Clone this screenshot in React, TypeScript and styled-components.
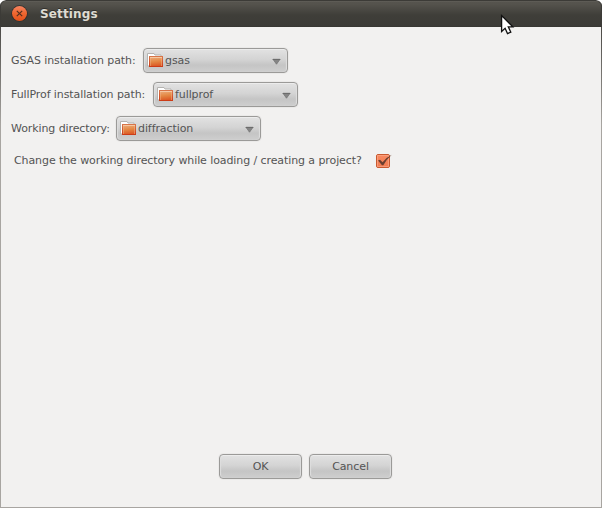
import React from "react";
import styled, { createGlobalStyle } from "styled-components";

const GlobalStyle = createGlobalStyle`
  * { box-sizing: border-box; }
  body { margin: 0; background: #fff; font-family: "DejaVu Sans", sans-serif; font-size: 11px; letter-spacing: -0.09px; color: #545454; }
  button { font: inherit; color: inherit; letter-spacing: inherit; }
`;

const Window = styled.main`
  position: relative;
  display: flex;
  flex-direction: column;
  width: 602px;
  height: 508px;
  overflow: hidden;
  border-radius: 6px 6px 0 0;
  background:
    linear-gradient(#4a4945 27px, #a8a5a1 125px) left / 1px 100% no-repeat,
    linear-gradient(#4a4945 27px, #a8a5a1 125px) right / 1px 100% no-repeat,
    #f2f1f0;
  border-bottom: 1px solid #a8a5a1;
`;

const TitleBar = styled.header`
  display: flex;
  align-items: center;
  flex: 0 0 27px;
  gap: 12px;
  padding: 0 11px;
  border: solid #3c3b37;
  border-width: 1px 1px 0;
  border-radius: 6px 6px 0 0;
  background: linear-gradient(#65635d 0, #56544e 1px, #55534d 3px, #3f3e39 14px, #3c3b37 25px, #353430 26px);
`;

const Title = styled.h1`
  margin: 0;
  font-size: 12px;
  line-height: 16px;
  font-weight: bold;
  letter-spacing: 0.15px;
  color: #dfdbd2;
  text-shadow: 0 -1px #302f2b;
`;

const CloseButton = styled.button`
  display: block;
  width: 16px;
  height: 16px;
  padding: 0;
  border: 0;
  background: none;
  svg { display: block; overflow: visible; }
`;

const Form = styled.section`
  display: flex;
  flex-direction: column;
  align-items: flex-start;
  gap: 9px;
  padding: 21px 11px 0;
`;

const Row = styled.div`
  display: flex;
  align-items: center;
  height: 25px;
`;

const Label = styled.label<{ $width: number }>`
  width: ${(p) => p.$width}px;
  white-space: nowrap;
  line-height: 15px;
`;

const Button = styled.button`
  display: flex;
  align-items: center;
  justify-content: center;
  width: 83px;
  height: 25px;
  padding: 0 0 1px;
  border: 1px solid #9b9a98;
  border-radius: 4px;
  background: linear-gradient(#e2e2e2, #d4d4d4 45%, #c5c5c5 70%, #cecece);
  box-shadow: inset 0 1px #ececec, inset 1px 0 1px #dedede, inset -1px 0 1px #dedede, 0 0 0 1px #ebeae9;
`;

const FolderButton = styled(Button)`
  width: 145px;
  padding: 0 6px 0 3px;
  justify-content: flex-start;
  svg { flex: none; }
`;

const FolderGlyph = styled.svg`
  align-self: flex-start;
  margin-top: 3px;
`;

const ArrowGlyph = styled.svg`
  margin-top: 2px;
`;

const FolderName = styled.span`
  flex: 1;
  padding-left: 2px;
  padding-bottom: 1px;
  text-align: left;
`;

const CheckRow = styled.div`
  display: flex;
  align-items: center;
  height: 18px;
  margin: 1px 0 0 3px;
`;

const Checkbox = styled.button`
  width: 18px;
  height: 18px;
  padding: 0;
  border: 0;
  background: none;
  svg { display: block; }
`;

const Actions = styled.footer`
  display: flex;
  justify-content: center;
  gap: 7px;
  margin-top: auto;
  padding: 0 0 28px 9px;
`;

const Pointer = styled.svg`
  position: absolute;
  left: 499px;
  top: 13px;
`;

function FolderIcon() {
  return (
    <FolderGlyph width="16" height="16" viewBox="0 0 16 16">
      <defs>
        <linearGradient id="folder" x1="0" y1="0" x2="0.15" y2="1">
          <stop offset="0" stopColor="#eeb184" />
          <stop offset=".55" stopColor="#e48945" />
          <stop offset="1" stopColor="#dc5a26" />
        </linearGradient>
        <linearGradient id="folder-edge" x1="0" y1="0" x2="0" y2="1">
          <stop offset="0" stopColor="#d8764a" />
          <stop offset="1" stopColor="#cd3c18" />
        </linearGradient>
      </defs>
      <path d="M.5 14V1.500h6.500l1 1.500h6V6H2.500v8z" fill="#fff" stroke="#b5b3b0" />
      <rect x="2.500" y="4.500" width="13" height="10" fill="url(#folder)" stroke="url(#folder-edge)" />
      <path d="M3 5.500h12" stroke="#f5c7a3" />
      <path d="M3.500 6v8M14.500 6v8" stroke="#f3b890" opacity=".45" />
    </FolderGlyph>
  );
}

function Arrow() {
  return (
    <ArrowGlyph width="9" height="7" viewBox="0 0 9 7">
      <path d="M1 1.300h7L4.500 6.200z" fill="#858585" stroke="#757575" strokeWidth=".8" />
      <path d="M.7 1.500h7.600" stroke="#6c6c6c" />
    </ArrowGlyph>
  );
}

const folders = [
  { label: "GSAS installation path:", folder: "gsas", width: 132 },
  { label: "FullProf installation path:", folder: "fullprof", width: 142 },
  { label: "Working directory:", folder: "diffraction", width: 105 },
];

export default function App() {
  return (
    <>
      <GlobalStyle />
      <Window>
        <TitleBar>
          <CloseButton aria-label="Close">
            <svg width="16" height="16" viewBox="0 0 16 16">
              <defs>
                <linearGradient id="close" x1="0" y1="0" x2="0" y2="1">
                  <stop offset="0" stopColor="#f58462" />
                  <stop offset=".5" stopColor="#ee662f" />
                  <stop offset="1" stopColor="#e4511b" />
                </linearGradient>
              </defs>
              <circle cx="7.5" cy="7.5" r="8.3" fill="#302f2c" />
              <circle cx="7.5" cy="7.5" r="7.5" fill="url(#close)" />
              <path d="m4.800 4.800 5.400 5.400m0-5.400-5.400 5.400" stroke="#54301f" strokeWidth="1.200" />
            </svg>
          </CloseButton>
          <Title>Settings</Title>
        </TitleBar>
        <Form>
          {folders.map((f) => (
            <Row key={f.folder}>
              <Label $width={f.width}>{f.label}</Label>
              <FolderButton>
                <FolderIcon />
                <FolderName>{f.folder}</FolderName>
                <Arrow />
              </FolderButton>
            </Row>
          ))}
          <CheckRow>
            <Label $width={361}>Change the working directory while loading / creating a project?</Label>
            <Checkbox role="checkbox" aria-checked="true" aria-label="Change the working directory">
              <svg width="18" height="18" viewBox="0 0 18 18">
                <defs>
                  <linearGradient id="check" x1="0" y1="0" x2="0" y2="1">
                    <stop offset="0" stopColor="#f98a62" />
                    <stop offset="1" stopColor="#f07b50" />
                  </linearGradient>
                </defs>
                <rect x="1.5" y="3.5" width="13" height="13" rx="1.5" fill="url(#check)" stroke="#c8592f" />
                <rect x="2.5" y="4.5" width="11" height="11" fill="none" stroke="#fbb093" opacity=".55" />
                <path d="M3 9.500 5 8.700 7.600 11.300Q11 6.500 16.800 3.800 11.200 8.800 8.300 14.200H7z" fill="#6b3f30" />
              </svg>
            </Checkbox>
          </CheckRow>
        </Form>
        <Actions>
          <Button>OK</Button>
          <Button>Cancel</Button>
        </Actions>
        <Pointer width="18" height="24" viewBox="0 0 18 24">
          <path d="M2.600 2.500v16l3.500-3.200 2.400 5.300 3.300-1.500-2.500-5.200h4.500z" fill="#fff" stroke="#111" strokeWidth="1.300" />
        </Pointer>
      </Window>
    </>
  );
}
